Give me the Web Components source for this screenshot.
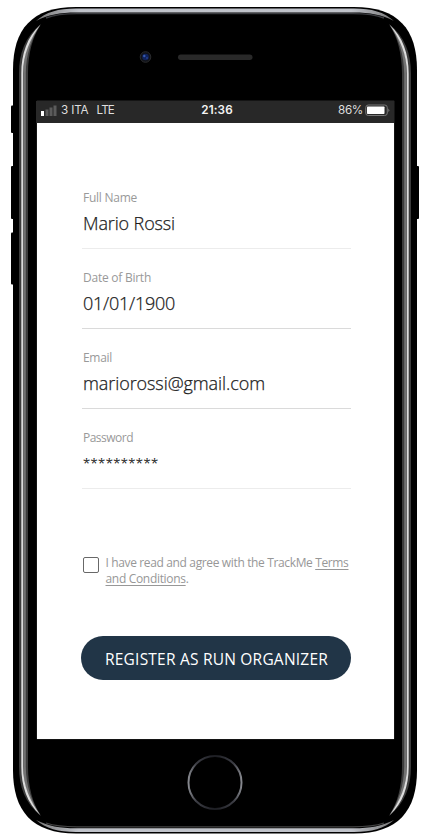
<!DOCTYPE html>
<html lang="en"><head><meta charset="utf-8"><title>Register</title>
<style>html,body{margin:0;background:#fff}body{width:430px;height:840px;overflow:hidden;font-family:"Open Sans","Noto Sans",sans-serif}</style></head>
<body>
<phone-device>
<status-bar></status-bar>
<register-form></register-form>
</phone-device>
<script>
const define=(name,html,init)=>customElements.define(name,class extends HTMLElement{
  connectedCallback(){
    if(this.shadowRoot)return;
    const t=document.createElement('template');t.innerHTML=html;
    this.attachShadow({mode:'open'}).append(t.content.cloneNode(true));
    if(init)init(this,this.shadowRoot);
  }
});

/* Text run whose tracking is adjusted to a given advance width */
define('fit-text',`<style>:host{display:inline-block;white-space:nowrap}span{display:inline-block}</style><span><slot></slot></span>`,(el,root)=>{
  const s=root.querySelector('span'),w=+el.getAttribute('width');
  s.style.letterSpacing=((w-s.getBoundingClientRect().width)/el.textContent.length)+'px';
});

define('phone-frame',`<style>:host{display:block}svg{display:block}</style>
<svg width="430" height="840" viewBox="0 0 430 840">
<defs>
<linearGradient id="edge" x1="0" x2="1"><stop offset="0" stop-color="#777"/><stop offset=".12" stop-color="#c0c3ca"/><stop offset=".88" stop-color="#c0c3ca"/><stop offset="1" stop-color="#777"/></linearGradient>
<linearGradient id="ring" x1="0" x2="1"><stop offset="0" stop-color="#85878d"/><stop offset=".15" stop-color="#3c3d44"/><stop offset=".5" stop-color="#1c1d22"/><stop offset=".85" stop-color="#3c3d44"/><stop offset="1" stop-color="#85878d"/></linearGradient>
<g id="rail">
<path d="M19 420V73.500C19 53 25 37 41 24C33 36 28 53 28 73.500V420Z" fill="#3c3c3c"/>
<path d="M23.200 420V73.500C23.200 55 28 39 40.500 25C31.500 38 26 54 25.800 73.500V420Z" fill="#737373"/>
<path d="M21.300 420V73.500C21.300 54 27 37 40.500 24.500C30 39 23.200 54 23 73.500V420Z" fill="#dcdcdc"/>
</g>
</defs>
<rect x="11" y="105.500" width="5" height="27.500" rx="1"/><rect x="11" y="166" width="5" height="53" rx="1"/><rect x="11" y="232.500" width="5" height="52" rx="1"/><rect x="414" y="166" width="5" height="53" rx="1"/>
<path d="M13 70C13 29 32 7 76 7H354C398 7 417 29 417 70V770C417 811 398 833.500 354 833.500H76C32 833.500 13 811 13 770Z" fill="#000"/>
<path d="M36 21C46 12 58 8.500 76 8.500H354C372 8.500 384 12 394 21C382 15 370 12.600 354 12.600H76C60 12.600 48 15 36 21Z" fill="url(#edge)"/>
<path d="M46 18C55 14.500 64 13.600 77 13.600H353C366 13.600 375 14.500 384 18" fill="none" stroke="#3b3c40" stroke-width="1.4"/>
<use href="#rail"/><use href="#rail" transform="translate(430 0) scale(-1 1)"/>
<use href="#rail" transform="translate(0 840) scale(1 -1)"/><use href="#rail" transform="translate(430 840) scale(-1 -1)"/>
<path d="M36 820C46 828.500 58 832 76 832H354C372 832 384 828.500 394 820C382 826 370 828.300 354 828.300H76C60 828.300 48 826 36 820Z" fill="url(#edge)"/>
<path d="M46 823C55 826 64 826.800 77 826.800H353C366 826.800 375 826 384 823" fill="none" stroke="#444" stroke-width="1.3"/>
<circle cx="145.500" cy="57" r="5.300" fill="#111318" stroke="#292a2d"/><circle cx="145.500" cy="57" r="3.300" fill="#10225a"/><circle cx="144.300" cy="56" r="1.200" fill="#365ab0"/><circle cx="147" cy="58" r=".9" fill="#263f91"/>
<rect x="178" y="54.500" width="74.500" height="5.500" rx="2.750" fill="#292929"/>
<circle cx="215" cy="782.500" r="26.500" fill="#000" stroke="url(#ring)" stroke-width="2"/>
</svg>`);

define('phone-device',`<style>
:host{display:grid;width:430px;height:840px}
phone-frame,.screen{grid-area:1/1}
.screen{margin:101px 0 0 37px;width:357px;height:638px;background:#fff;display:flex;flex-direction:column;box-shadow:0 0 1px #777}
</style><phone-frame></phone-frame><div class="screen"><slot></slot></div>`);

define('status-bar',`<style>
:host{display:grid;grid-template-columns:1fr auto 1fr;align-items:center;box-sizing:border-box;height:22px;margin-left:-1px;padding:0 4px 4px 5px;background:#282828;color:#dedede;font:11.700px/18px Inter,Roboto,sans-serif}
.left,.right{display:flex;align-items:center}.right{justify-content:flex-end;gap:2px}.left svg{margin-right:4px}.lte{margin-left:8px}b{color:#f4f4f4;font-weight:600;padding-left:3px;font-size:11.700px}
</style><div class="left"><svg width="16" height="11"><rect y="6" width="3" height="5" fill="#fff"/><path d="M4.500 4.500h3V11h-3zM8.500 2.500h3V11h-3zM12.500 .5h3V11h-3z" fill="#5b5b5b"/></svg><fit-text width="27.500">3 ITA</fit-text><fit-text class="lte" width="17.500">LTE</fit-text></div>
<b><fit-text width="31.500">21:36</fit-text></b>
<div class="right"><fit-text width="25">86%</fit-text><svg width="25" height="13"><rect x=".75" y="1" width="21.500" height="10.500" rx="2.500" fill="none" stroke="#777"/><rect x="2" y="2.500" width="17.500" height="7.500" rx=".7" fill="#fff"/><path d="M23.300 4.500q2 1.800 0 3.600z" fill="#777"/></svg></div>`);

define('form-field',`<style>
:host{display:flex;flex-direction:column;box-sizing:border-box;height:80px;margin:0 1px;padding-left:1px;border-bottom:1px solid var(--line,#dadada)}
.label{color:#999;font-size:12px;line-height:16px;height:16px;margin-top:21px}
.value{color:#1b1b1b;font-size:var(--size,18px);font-weight:300;line-height:24px;height:24px;margin-top:5px;-webkit-text-stroke:.25px #1b1b1b}
</style><div class="label"><slot name="label"></slot></div><div class="value"><slot></slot></div>`);

define('terms-check',`<style>
:host{display:flex;gap:6.5px;padding-left:2px;margin-top:66px;color:#979797;font-size:12px;line-height:16px}
i{box-sizing:border-box;width:16px;height:16px;margin-top:2px;border:1px solid #686868;border-radius:2px;flex:none}
.copy{display:flex;flex-direction:column}u{text-underline-offset:1.5px;text-decoration-thickness:1px}
</style><i></i><div class="copy"><fit-text width="243">I have read and agree with the TrackMe <u>Terms</u></fit-text><fit-text width="83"><u>and Conditions</u>.</fit-text></div>`);

define('primary-button',`<style>
:host{display:block;margin-top:49px}
button{display:flex;align-items:center;justify-content:center;width:270px;height:44px;border:0;border-radius:22px;padding:2px 0 0 1px;background:#213547;color:#fff;font:400 15.500px/22px "Open Sans","Noto Sans",sans-serif}
</style><button><slot></slot></button>`);

define('register-form',`<style>:host{display:block;padding:46px 42px 0 44px}</style>
<form-field style="--line:#ececec"><fit-text slot="label" width="54">Full Name</fit-text><fit-text width="92">Mario Rossi</fit-text></form-field>
<form-field><fit-text slot="label" width="68">Date of Birth</fit-text><fit-text width="92">01/01/1900</fit-text></form-field>
<form-field><fit-text slot="label" width="29">Email</fit-text><fit-text width="182">mariorossi@gmail.com</fit-text></form-field>
<form-field style="--line:#ececec;--size:13px"><fit-text slot="label" width="50">Password</fit-text><fit-text width="75.500">**********</fit-text></form-field>
<terms-check></terms-check><primary-button><fit-text width="223">REGISTER AS RUN ORGANIZER</fit-text></primary-button>`);
</script></body></html>
